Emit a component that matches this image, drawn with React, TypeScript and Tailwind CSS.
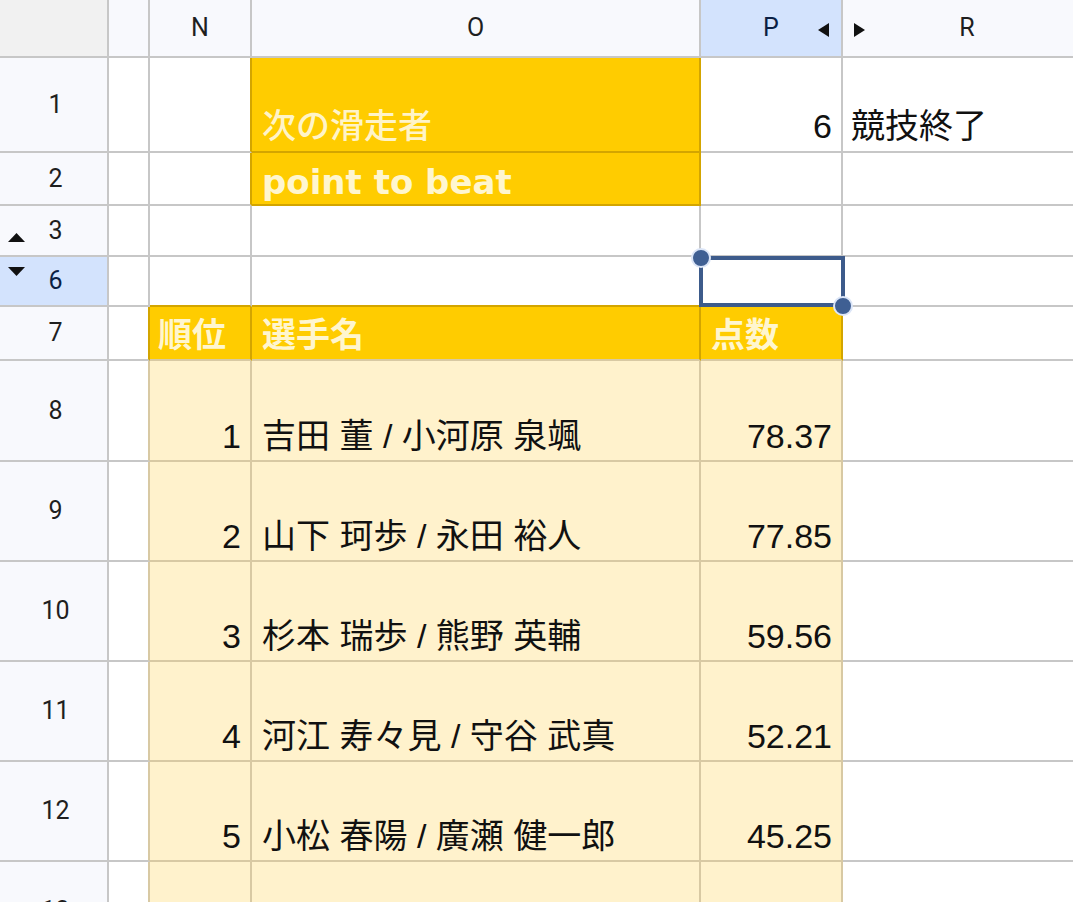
import type { ReactNode } from "react";

const rG = "border-r-[#c7c7c7]";
const bG = "border-b-[#c7c7c7]";
const rY = "border-r-[#d3a500]";
const bY = "border-b-[#d3a500]";
const rT = "border-r-[#d8c9a3]";
const bT = "border-b-[#d8c9a3]";

const results = [
  { rank: 1, name: "吉田 董 / 小河原 泉颯", score: "78.37" },
  { rank: 2, name: "山下 珂歩 / 永田 裕人", score: "77.85" },
  { rank: 3, name: "杉本 瑞歩 / 熊野 英輔", score: "59.56" },
  { rank: 4, name: "河江 寿々見 / 守谷 武真", score: "52.21" },
  { rank: 5, name: "小松 春陽 / 廣瀬 健一郎", score: "45.25" },
];

function Cell({ className = "", children }: { className?: string; children?: ReactNode }) {
  return (
    <div className={`flex border-r-2 border-b-2 overflow-hidden whitespace-nowrap ${className}`}>
      {children}
    </div>
  );
}

function RowHead({ label, active, arrow }: { label: string; active?: boolean; arrow?: "up" | "down" }) {
  return (
    <Cell
      className={`relative items-center justify-center ${rG} ${bG} ${active ? "bg-[#d3e3fd] text-[#0b1f44]" : "bg-[#f8f9fd] text-[#1f1f1f]"}`}
    >
      {arrow === "up" && (
        <svg className="absolute left-[8px] top-[27px]" width="17" height="9" viewBox="0 0 17 9">
          <path d="M0 9 L8.5 0 L17 9 Z" fill="#111" />
        </svg>
      )}
      {arrow === "down" && (
        <svg className="absolute left-[8px] top-[10px]" width="17" height="9" viewBox="0 0 17 9">
          <path d="M0 0 L8.5 9 L17 0 Z" fill="#111" />
        </svg>
      )}
      <span className="pl-1 text-[25px]">{label}</span>
    </Cell>
  );
}

const txt = "font-['Liberation_Sans','Noto_Sans_CJK_JP',sans-serif] text-[34px] leading-none";

export default function App() {
  return (
    <div className="h-[902px] w-[1073px] overflow-hidden bg-white font-['Roboto',sans-serif]">
      <div className="relative grid grid-cols-[109px_41px_102px_449px_142px_250px] grid-rows-[58px_95px_53px_51px_50px_54px_101px_100px_100px_100px_100px_100px]">
        {/* column headers */}
        <Cell className={`bg-[#f1f1f1] ${rG} ${bG}`} />
        <Cell className={`bg-[#f8f9fd] ${rG} ${bG}`} />
        <Cell className={`items-center justify-center bg-[#f8f9fd] text-[25px] text-[#1f1f1f] ${rG} ${bG}`}>N</Cell>
        <Cell className={`items-center justify-center bg-[#f8f9fd] text-[25px] text-[#1f1f1f] ${rG} ${bG}`}>O</Cell>
        <Cell className={`relative items-center justify-center bg-[#d3e3fd] text-[25px] text-[#0b1f44] ${rG} ${bG}`}>
          P
          <svg className="absolute right-[12px] top-[23px]" width="11" height="14" viewBox="0 0 11 14">
            <path d="M11 0 L0 7 L11 14 Z" fill="#111" />
          </svg>
        </Cell>
        <Cell className={`relative items-center justify-center bg-[#f8f9fd] text-[25px] text-[#1f1f1f] ${rG} ${bG}`}>
          <svg className="absolute left-[11px] top-[23px]" width="11" height="14" viewBox="0 0 11 14">
            <path d="M0 0 L11 7 L0 14 Z" fill="#111" />
          </svg>
          R
        </Cell>

        {/* row 1 */}
        <RowHead label="1" />
        <Cell className={`${rG} ${bG}`} />
        <Cell className={`${rY} ${bG}`} />
        <Cell className={`items-end bg-[#ffcc00] px-[10px] pb-[8px] font-medium text-[#fff4c8] ${txt} ${rY} ${bY}`}>次の滑走者</Cell>
        <Cell className={`items-end justify-end px-[9px] pb-[8px] text-[#111] ${txt} ${rG} ${bG}`}>6</Cell>
        <Cell className={`items-end px-[8px] pb-[8px] text-[#111] ${txt} ${rG} ${bG}`}>競技終了</Cell>

        {/* row 2 */}
        <RowHead label="2" />
        <Cell className={`${rG} ${bG}`} />
        <Cell className={`${rY} ${bG}`} />
        <Cell className={`items-end bg-[#ffcc00] px-[10px] pb-[5px] font-['DejaVu_Sans',sans-serif] text-[34px] leading-none font-bold text-[#fff6cf] ${rY} ${bY}`}>
          point to beat
        </Cell>
        <Cell className={`${rG} ${bG}`} />
        <Cell className={`${rG} ${bG}`} />

        {/* row 3 */}
        <RowHead label="3" arrow="up" />
        <Cell className={`${rG} ${bG}`} />
        <Cell className={`${rG} ${bG}`} />
        <Cell className={`${rG} ${bG}`} />
        <Cell className={`${rG} ${bG}`} />
        <Cell className={`${rG} ${bG}`} />

        {/* row 6 */}
        <RowHead label="6" arrow="down" active />
        <Cell className={`${rG} ${bG}`} />
        <Cell className={`${rG} ${bY}`} />
        <Cell className={`${rG} ${bY}`} />
        <Cell className={`${rG} ${bY}`} />
        <Cell className={`${rG} ${bG}`} />

        {/* row 7 */}
        <RowHead label="7" />
        <Cell className={`${rY} ${bG}`} />
        <Cell className={`items-end bg-[#ffcc00] px-[8px] pb-[7px] text-[#fff6cf] ${txt} font-bold ${rY} ${bT}`}>順位</Cell>
        <Cell className={`items-end bg-[#ffcc00] px-[10px] pb-[7px] text-[#fff6cf] ${txt} font-bold ${rY} ${bT}`}>選手名</Cell>
        <Cell className={`items-end bg-[#ffcc00] px-[10px] pb-[7px] text-[#fff6cf] ${txt} font-bold ${rY} ${bT}`}>点数</Cell>
        <Cell className={`${rG} ${bG}`} />

        {/* rows 8-12 */}
        {results.map((r, i) => (
          <div key={r.rank} className="contents">
            <RowHead label={String(8 + i)} />
            <Cell className={`${rT} ${bG}`} />
            <Cell className={`items-end justify-end bg-[#fff2cc] px-[9px] pb-[7px] text-[#111] ${txt} ${rT} ${bT}`}>{r.rank}</Cell>
            <Cell className={`items-end bg-[#fff2cc] px-[10px] pb-[7px] text-[#111] ${txt} ${rT} ${bT}`}>{r.name}</Cell>
            <Cell className={`items-end justify-end bg-[#fff2cc] px-[9px] pb-[7px] text-[#111] ${txt} ${rT} ${bT}`}>{r.score}</Cell>
            <Cell className={`${rG} ${bG}`} />
          </div>
        ))}

        {/* row 13 */}
        <RowHead label="13" />
        <Cell className={`${rT} ${bG}`} />
        <Cell className={`bg-[#fff2cc] ${rT} ${bT}`} />
        <Cell className={`bg-[#fff2cc] ${rT} ${bT}`} />
        <Cell className={`bg-[#fff2cc] ${rT} ${bT}`} />
        <Cell className={`${rG} ${bG}`} />

        {/* selection */}
        <div className="pointer-events-none absolute left-[699px] top-[256px] h-[51px] w-[146px] border-4 border-[#3d5b8b]" />
        <div className="pointer-events-none absolute left-[691px] top-[248px] h-[20px] w-[20px] rounded-full border-2 border-[#dbe5f7] bg-[#3f5f93]" />
        <div className="pointer-events-none absolute left-[833px] top-[296px] h-[20px] w-[20px] rounded-full border-2 border-[#dbe5f7] bg-[#3f5f93]" />
      </div>
    </div>
  );
}
